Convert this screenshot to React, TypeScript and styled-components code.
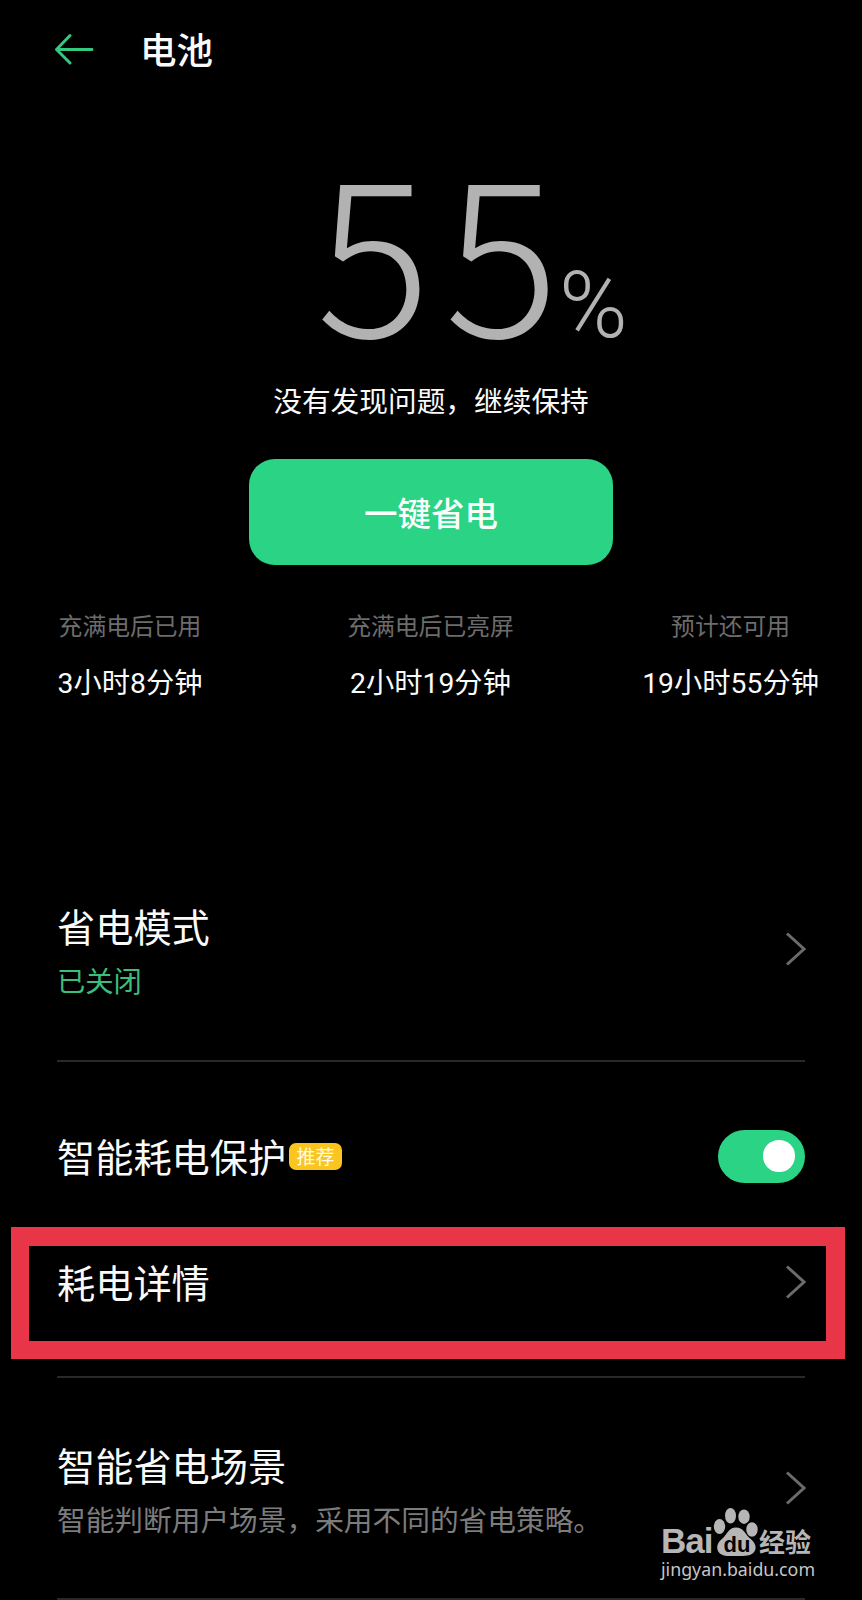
import React from 'react';
import styled, { createGlobalStyle } from 'styled-components';

const GlobalStyle = createGlobalStyle`
  * { box-sizing: border-box; }
  body {
    margin: 0;
    background: #000;
    color: #fafafa;
    font-family: "Noto Sans CJK SC", sans-serif;
  }
`;

const Screen = styled.main`
  position: relative;
  display: flex;
  flex-direction: column;
  width: 862px;
  height: 1600px;
  overflow: hidden;
  background: #000;
`;

const Header = styled.header`
  display: flex;
  align-items: center;
  gap: 46.5px;
  height: 98px;
  padding-left: 53.5px;
`;

const BackIcon = styled.svg`
  width: 40px;
  height: 32px;
  fill: none;
  stroke: #35c97f;
  stroke-width: 2.9;
  stroke-linecap: round;
  stroke-linejoin: round;
`;

const PageTitle = styled.h1`
  margin: 0;
  font-size: 36.5px;
  font-weight: 500;
  line-height: 46px;
`;

const Summary = styled.section`
  display: flex;
  flex-direction: column;
  align-items: center;
`;

const Level = styled.div`
  display: flex;
  align-items: baseline;
  height: 280px;
  padding: 56px 0 0 82px;
  color: #b2b2b2;
  font-weight: 300;
`;

const LevelValue = styled.span`
  font-size: 214px;
  line-height: 180px;
  letter-spacing: 14px;
`;

const LevelUnit = styled.span`
  margin-left: -14px;
  font-family: Roboto, sans-serif;
  font-size: 93px;
  line-height: 90px;
`;

const Status = styled.p`
  margin: 0;
  height: 81px;
  font-size: 28.7px;
  line-height: 44px;
`;

const SaveButton = styled.button`
  width: 364px;
  height: 106px;
  padding: 0;
  border: 0;
  border-radius: 26px;
  background: #2bd384;
  color: #fafffc;
  font: 500 33.5px/40px "Noto Sans CJK SC", sans-serif;
`;

const Stats = styled.section`
  display: grid;
  grid-template-columns: 1fr auto 1fr;
  height: 301px;
  padding: 41.5px 43px 0 42px;
`;

const Stat = styled.div`
  display: flex;
  flex-direction: column;
  align-items: center;
  gap: 21px;

  &:first-child {
    justify-self: start;
    margin-left: 15.5px;
  }
  &:last-child {
    justify-self: end;
  }
`;

const StatLabel = styled.span`
  color: #6c6c6c;
  font-size: 23.8px;
  line-height: 36px;
`;

const StatValue = styled.span`
  font-family: Roboto, "Noto Sans CJK SC", sans-serif;
  font-size: 28.3px;
  line-height: 40px;
`;

const Row = styled.section<{ $height: number; $top?: number; $bottom?: number; $divided?: boolean }>`
  position: relative;
  display: flex;
  align-items: center;
  justify-content: space-between;
  height: ${p => p.$height}px;
  margin: 0 57px;
  padding: ${p => p.$top ?? 0}px 0 ${p => p.$bottom ?? 0}px;
  border-bottom: ${p => (p.$divided ? '2px solid #292929' : '0')};
`;

const RowText = styled.div`
  display: flex;
  flex-direction: column;
  gap: 2px;
  padding-top: 4px;
`;

const RowTitle = styled.h2`
  display: flex;
  align-items: center;
  gap: 3px;
  margin: 0;
  font-size: 38.2px;
  font-weight: 400;
  line-height: 56px;
`;

const RowNote = styled.p<{ $active?: boolean }>`
  margin: 0;
  color: ${p => (p.$active ? '#3bbd7c' : '#7c7c7c')};
  font-size: ${p => (p.$active ? 28.3 : 28.7)}px;
  line-height: 48px;
`;

const Badge = styled.span`
  width: 53px;
  height: 27px;
  border-radius: 7px;
  background: #fbc51f;
  color: #fffbe8;
  font-size: 19px;
  line-height: 26px;
  text-align: center;
`;

const ChevronIcon = styled.svg`
  width: 22px;
  height: 36px;
  margin-right: -1px;
  fill: none;
  stroke: #6b6b6b;
  stroke-width: 3;
`;

const Toggle = styled.span`
  display: flex;
  justify-content: flex-end;
  align-items: center;
  width: 87px;
  height: 53px;
  padding-right: 10.5px;
  border-radius: 27px;
  background: #2bd384;
`;

const Knob = styled.span`
  width: 31.5px;
  height: 31.5px;
  border-radius: 50%;
  background: #fff;
`;

const Highlight = styled.div`
  position: absolute;
  top: 11px;
  left: -46px;
  width: 834px;
  height: 132px;
  border: 18px solid #e93548;
  border-top-width: 19px;
  border-right-width: 19px;
`;

const Watermark = styled.div`
  position: absolute;
  left: 661px;
  top: 1507px;
  width: 160px;
`;

const Brand = styled.div`
  display: flex;
  align-items: flex-end;
  height: 50px;
  color: #b6b6b6;
`;

const BrandName = styled.span`
  width: 51px;
  font: 700 35px/33px "Liberation Sans", sans-serif;
  letter-spacing: -1px;
`;

const Paw = styled.svg`
  width: 46px;
  height: 50px;
  margin-right: 1px;
  fill: #b6b6b6;
`;

const PawText = styled.text`
  fill: #000;
  font: 700 22px "Liberation Sans", sans-serif;
`;

const BrandSuffix = styled.span`
  font-size: 26px;
  font-weight: 700;
  line-height: 32px;
`;

const Site = styled.div`
  color: #c6c6c6;
  font: 400 17.8px/24px "Noto Sans", sans-serif;
`;

const Chevron = () => (
  <ChevronIcon viewBox="0 0 22 36">
    <path d="M3 2.5 20 18 3 33.5" />
  </ChevronIcon>
);

const stats = [
  { label: '充满电后已用', value: '3小时8分钟' },
  { label: '充满电后已亮屏', value: '2小时19分钟' },
  { label: '预计还可用', value: '19小时55分钟' },
];

export default function App() {
  return (
    <>
      <GlobalStyle />
      <Screen>
        <Header>
          <BackIcon viewBox="0 0 40 32">
            <path d="M38 16.5H2.5M16 2.5 2.5 16.5 16 30" />
          </BackIcon>
          <PageTitle>电池</PageTitle>
        </Header>
        <Summary>
          <Level>
            <LevelValue>55</LevelValue>
            <LevelUnit>%</LevelUnit>
          </Level>
          <Status>没有发现问题，继续保持</Status>
          <SaveButton>一键省电</SaveButton>
        </Summary>
        <Stats>
          {stats.map(s => (
            <Stat key={s.label}>
              <StatLabel>{s.label}</StatLabel>
              <StatValue>{s.value}</StatValue>
            </Stat>
          ))}
        </Stats>
        <Row $height={196} $bottom={29} $divided>
          <RowText>
            <RowTitle>省电模式</RowTitle>
            <RowNote $active>已关闭</RowNote>
          </RowText>
          <Chevron />
        </Row>
        <Row $height={154} $top={34}>
          <RowTitle>
            智能耗电保护<Badge>推荐</Badge>
          </RowTitle>
          <Toggle>
            <Knob />
          </Toggle>
        </Row>
        <Row $height={162} $bottom={29} $divided>
          <RowTitle>耗电详情</RowTitle>
          <Chevron />
          <Highlight />
        </Row>
        <Row $height={222} $divided>
          <RowText>
            <RowTitle>智能省电场景</RowTitle>
            <RowNote>智能判断用户场景，采用不同的省电策略。</RowNote>
          </RowText>
          <Chevron />
        </Row>
        <Watermark>
          <Brand>
            <BrandName>Bai</BrandName>
            <Paw viewBox="0 0 46 50">
              <ellipse cx="7.500" cy="19.500" rx="5.700" ry="7.500" />
              <ellipse cx="18.500" cy="8.700" rx="5.500" ry="7.700" />
              <ellipse cx="32" cy="9.700" rx="5.700" ry="7.300" />
              <ellipse cx="40" cy="22.500" rx="5.700" ry="7.300" />
              <path d="M24 20.500c7 0 9 6 13 10 5 4 8 8 6 13-3 6-10 5.500-18 5.500S9 50 6 44c-2-5 0-9 5-13 4-4 6-10.500 13-10.500z" />
              <PawText x="11.5" y="45">du</PawText>
            </Paw>
            <BrandSuffix>经验</BrandSuffix>
          </Brand>
          <Site>jingyan.baidu.com</Site>
        </Watermark>
      </Screen>
    </>
  );
}
